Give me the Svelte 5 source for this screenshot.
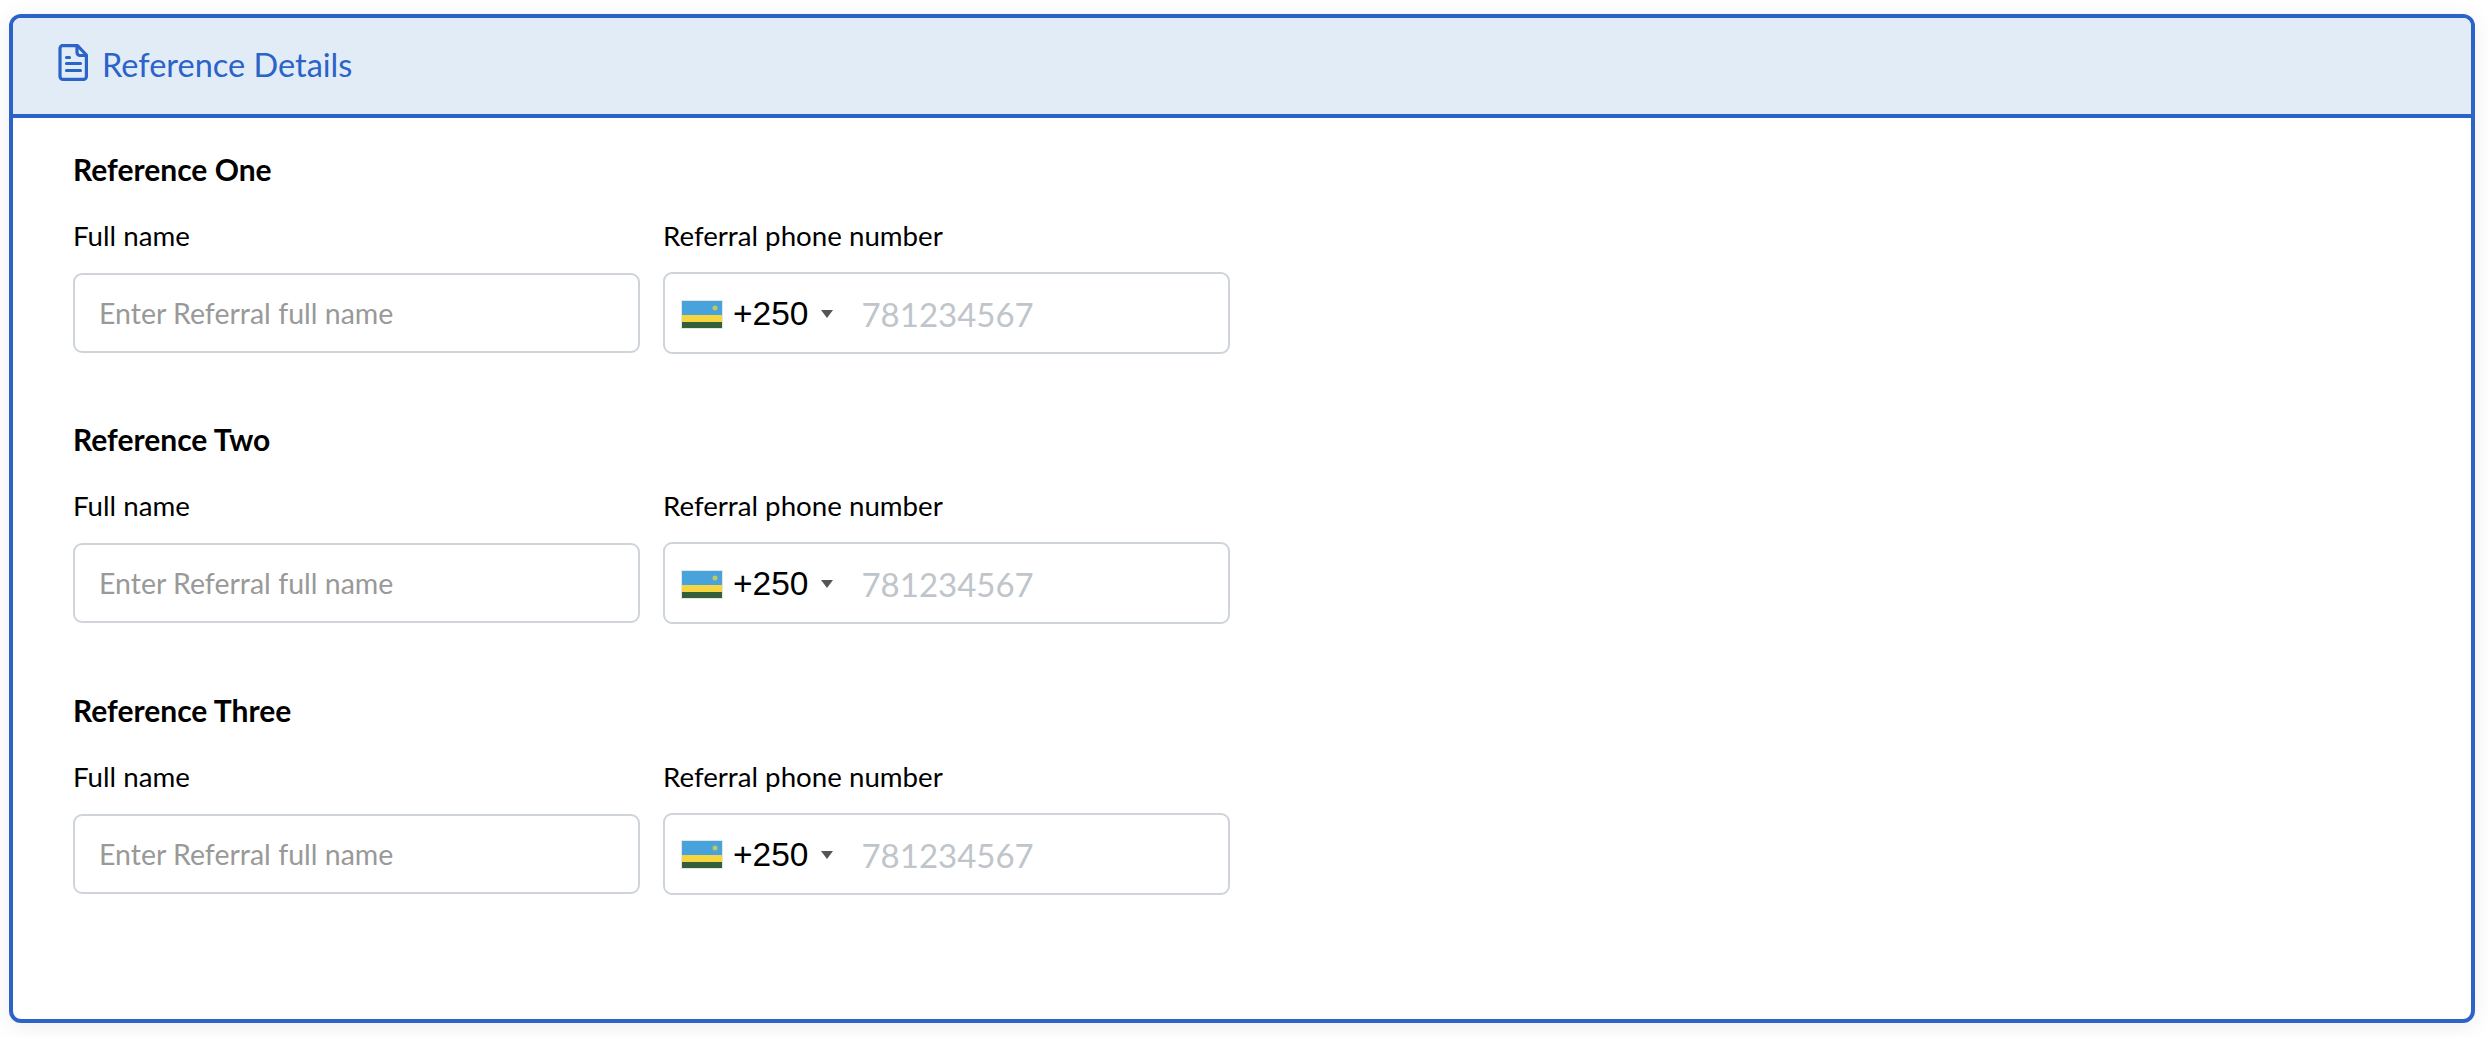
<script>
	const references = ["Reference One", "Reference Two", "Reference Three"];
</script>

<div class="page">
	<section class="card">
		<header class="card-head">
			<svg class="doc-icon" viewBox="0 0 30 37" fill="none" stroke="currentColor" stroke-width="3.2" stroke-linejoin="round" stroke-linecap="round">
				<path d="M5 1.6h14.5L28.4 11v21.4a3 3 0 0 1-3 3H5a3 3 0 0 1-3-3v-28a3 3 0 0 1 3-3z" />
				<path d="M19 2v6.5a3 3 0 0 0 3 3h6" />
				<path d="M8.5 13.5h3M8.5 19.5h14M8.5 26.5h14" />
			</svg>
			<span>Reference Details</span>
		</header>
		<div class="card-body">
			{#each references as title}
				<div class="ref">
					<h3>{title}</h3>
					<div class="fields">
						<div class="field">
							<label for={title + "-name"}>Full name</label>
							<input id={title + "-name"} class="name-input" type="text" placeholder="Enter Referral full name" />
						</div>
						<div class="field">
							<label for={title + "-phone"}>Referral phone number</label>
							<div class="phone">
								<svg class="flag" viewBox="0 0 42 29">
									<rect width="42" height="29" fill="#e4e6e6" />
									<rect x="1" y="1" width="40" height="14" fill="#48a2dc" />
									<rect x="1" y="15" width="40" height="7" fill="#f6d540" />
									<rect x="1" y="22" width="40" height="6" fill="#335f3b" />
									<circle cx="34" cy="8" r="2.5" fill="#c3c85a" />
								</svg>
								<span class="dial">+250</span>
								<span class="caret"></span>
								<input id={title + "-phone"} type="tel" placeholder="781234567" />
							</div>
						</div>
					</div>
				</div>
			{/each}
		</div>
	</section>
</div>

<style>
	:global(body) {
		background: #fff;
	}
	.page {
		padding: 14px 13px 14px 9px;
	}
	.card {
		border: 4px solid #2b63c9;
		border-radius: 12px;
		height: 1009px;
		box-sizing: border-box;
		background: #fff;
		box-shadow: 0 4px 24px rgba(0, 0, 0, 0.07);
		font-family: Lato, "Noto Sans", sans-serif;
		color: #000;
	}
	.card-head {
		display: flex;
		align-items: center;
		gap: 14px;
		height: 93px;
		padding: 0 0 3px 45px;
		background: #e2ecf7;
		border-bottom: 4px solid #2b63c9;
		border-radius: 8px 8px 0 0;
		color: #2b63c9;
		font-size: 32.5px;
		box-sizing: content-box;
	}
	.doc-icon {
		width: 30px;
		height: 37px;
		margin-top: -4px;
	}
	.card-body {
		padding: 31px 0 0 60px;
	}
	.ref {
		height: 270.4px;
	}
	h3 {
		margin: 0;
		font-size: 30px;
		font-weight: 700;
		line-height: 40px;
	}
	.fields {
		display: grid;
		grid-template-columns: 567px 567px;
		column-gap: 23px;
		margin-top: 29px;
	}
	.field {
		display: flex;
		flex-direction: column;
	}
	label {
		font-size: 27.7px;
		line-height: 36px;
		margin-bottom: 18px;
	}
	input {
		border: none;
		outline: none;
		background: transparent;
		font-family: inherit;
		padding: 0;
	}
	.name-input {
		box-sizing: border-box;
		height: 80px;
		margin-top: 1px;
		padding: 0 24px;
		border: 2px solid #ced4da;
		border-radius: 9px;
		font-size: 28.5px;
	}
	.name-input::placeholder {
		color: #999;
		opacity: 1;
	}
	.phone {
		box-sizing: border-box;
		display: flex;
		align-items: center;
		height: 82px;
		padding: 2px 0 0 16px;
		border: 2px solid #ced4da;
		border-radius: 9px;
	}
	.flag {
		width: 42px;
		height: 29px;
		flex: none;
	}
	.dial {
		margin-left: 10px;
		font-family: "Liberation Sans", sans-serif;
		font-size: 33.5px;
	}
	.caret {
		margin-left: 13px;
		border-left: 6px solid transparent;
		border-right: 6px solid transparent;
		border-top: 8px solid #555;
	}
	.phone input {
		flex: 1;
		min-width: 0;
		margin-left: 28px;
		font-size: 33px;
	}
	.phone input::placeholder {
		color: #bfc5ca;
		opacity: 1;
	}
</style>
